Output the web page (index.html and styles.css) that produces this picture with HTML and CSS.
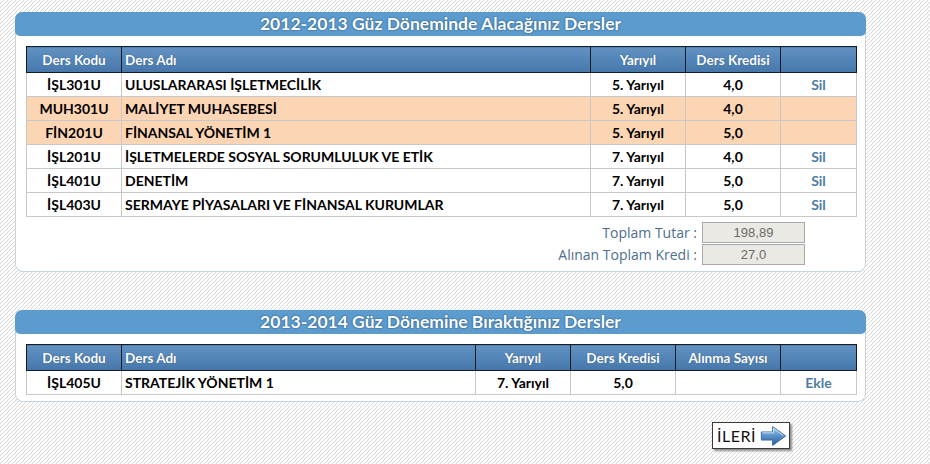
FILE: index.html
```html
<!DOCTYPE html>
<html lang="tr">
<head>
<meta charset="utf-8">
<link rel="stylesheet" href="styles.css">
</head>
<body>
<div class="page">
  <section class="panel">
    <h2 class="panel-title">2012-2013 Güz Döneminde Alacağınız Dersler</h2>
    <div class="panel-body">
      <table class="grid grid-a">
        <colgroup>
          <col class="c-kod"><col class="c-ad"><col class="c-yy"><col class="c-kr"><col class="c-act">
        </colgroup>
        <thead>
          <tr><th>Ders Kodu</th><th class="left">Ders Adı</th><th>Yarıyıl</th><th>Ders Kredisi</th><th></th></tr>
        </thead>
        <tbody>
          <tr><td>İŞL301U</td><td class="left">ULUSLARARASI İŞLETMECİLİK</td><td>5. Yarıyıl</td><td>4,0</td><td><a class="act">Sil</a></td></tr>
          <tr class="locked"><td>MUH301U</td><td class="left">MALİYET MUHASEBESİ</td><td>5. Yarıyıl</td><td>4,0</td><td></td></tr>
          <tr class="locked"><td>FİN201U</td><td class="left">FİNANSAL YÖNETİM 1</td><td>5. Yarıyıl</td><td>5,0</td><td></td></tr>
          <tr><td>İŞL201U</td><td class="left">İŞLETMELERDE SOSYAL SORUMLULUK VE ETİK</td><td>7. Yarıyıl</td><td>4,0</td><td><a class="act">Sil</a></td></tr>
          <tr><td>İŞL401U</td><td class="left">DENETİM</td><td>7. Yarıyıl</td><td>5,0</td><td><a class="act">Sil</a></td></tr>
          <tr><td>İŞL403U</td><td class="left">SERMAYE PİYASALARI VE FİNANSAL KURUMLAR</td><td>7. Yarıyıl</td><td>5,0</td><td><a class="act">Sil</a></td></tr>
        </tbody>
      </table>
      <div class="totals">
        <div class="total-row"><span class="total-label">Toplam Tutar :</span><span class="total-box">198,89</span></div>
        <div class="total-row"><span class="total-label">Alınan Toplam Kredi :</span><span class="total-box">27,0</span></div>
      </div>
    </div>
  </section>

  <section class="panel panel-b">
    <h2 class="panel-title">2013-2014 Güz Dönemine Bıraktığınız Dersler</h2>
    <div class="panel-body">
      <table class="grid grid-b">
        <colgroup>
          <col class="c-kod"><col class="c-ad2"><col class="c-yy"><col class="c-kr2"><col class="c-al"><col class="c-act">
        </colgroup>
        <thead>
          <tr><th>Ders Kodu</th><th class="left">Ders Adı</th><th>Yarıyıl</th><th>Ders Kredisi</th><th>Alınma Sayısı</th><th></th></tr>
        </thead>
        <tbody>
          <tr><td>İŞL405U</td><td class="left">STRATEJİK YÖNETİM 1</td><td>7. Yarıyıl</td><td>5,0</td><td></td><td><a class="act">Ekle</a></td></tr>
        </tbody>
      </table>
    </div>
  </section>

  <div class="actions">
    <button class="next-btn" type="button">
      <span class="next-text">İLERİ</span>
      <svg class="next-arrow" width="30" height="24" viewBox="0 0 30 24" aria-hidden="true">
        <defs>
          <linearGradient id="ag" x1="0" y1="0" x2="0" y2="1">
            <stop offset="0" stop-color="#a9cdef"/>
            <stop offset="0.45" stop-color="#5f97cf"/>
            <stop offset="1" stop-color="#2c5a92"/>
          </linearGradient>
        </defs>
        <path d="M1.5 7.5 H14 V1.5 L28.5 12 L14 22.5 V16.5 H1.5 Z" fill="url(#ag)" stroke="#3a6597" stroke-width="1" stroke-linejoin="round"/>
        <path d="M2.5 8.5 H15 V3.5 L26 11.5" fill="none" stroke="#d3e6f7" stroke-width="1"/>
      </svg>
    </button>
  </div>
</div>
</body>
</html>
```

FILE: styles.css
```css
* { box-sizing: border-box; }
html, body { margin: 0; padding: 0; }
body {
  width: 930px;
  height: 464px;
  overflow: hidden;
  font-family: Lato, "Open Sans", "DejaVu Sans", sans-serif;
  background-color: #ffffff;
  background-image: linear-gradient(-45deg, #d6d6d6 0 12.5%, transparent 12.5% 50%, #d6d6d6 50% 62.5%, transparent 62.5% 100%);
  background-size: 4px 4px;
}
.page {
  padding: 12px 64px 0 15px;
}
.panel {
  width: 851px;
  background: #ffffff;
  border: 1px solid #c9d4dd;
  border-top: none;
  border-radius: 8px;
  padding-bottom: 6px;
}
.panel-b { margin-top: 38px; }
.panel-title {
  margin: 0 -1px;
  height: 24px;
  line-height: 24px;
  background: #5c9bcd;
  border-radius: 7px 7px 5px 5px;
  color: #ffffff;
  text-align: center;
  font-size: 17.5px;
  font-weight: 700;
  text-shadow: 0 0 2px #2d5c85, 0 0 1px #2d5c85;
}
.panel-body {
  padding: 10px 9px 0 10px;
}
.grid {
  width: 830px;
  border-collapse: collapse;
  table-layout: fixed;
  font-size: 14px;
}
.c-kod { width: 95px; }
.c-ad { width: 469px; }
.c-yy { width: 95px; }
.c-kr { width: 95px; }
.c-act { width: 76px; }
.c-ad2 { width: 354px; }
.c-kr2 { width: 105px; }
.c-al { width: 105px; }
.grid th {
  height: 26px;
  padding: 0 3px;
  background: linear-gradient(#6392c2, #5283b6 55%, #4777aa);
  color: #ffffff;
  font-size: 13.5px;
  font-weight: 700;
  border: 1px solid #121a24;
  text-align: center;
  text-shadow: 0 0 1px #2e4e70;
}
.grid td {
  height: 24px;
  padding: 0 3px;
  border: 1px solid #c8c8c8;
  font-weight: 700;
  color: #000000;
  text-align: center;
  white-space: nowrap;
}
.grid th.left, .grid td.left { text-align: left; }
.grid tr.locked td { background: #fcd5b5; }
.act {
  color: #4e7ca3;
  font-weight: 700;
  cursor: pointer;
}
.totals {
  display: flex;
  flex-direction: column;
  gap: 1px;
  padding: 5px 0 0 0;
  margin-right: 51px;
  align-items: flex-end;
}
.total-row {
  display: flex;
  align-items: center;
  gap: 5px;
}
.total-label {
  color: #4d6e8e;
  font-size: 14px;
  font-family: "Open Sans", Lato, sans-serif;
}
.total-box {
  width: 103px;
  height: 21px;
  line-height: 19px;
  background: #ebe9e4;
  border: 1px solid #a9a9a9;
  text-align: center;
  color: #6a6a6a;
  font-size: 13px;
  font-family: "Liberation Sans", Arial, sans-serif;
}
.actions {
  display: flex;
  justify-content: flex-start;
  padding: 20px 0 0 697px;
}
.next-btn {
  display: flex;
  align-items: center;
  gap: 4px;
  width: 78px;
  height: 27px;
  padding: 0 2px 0 4px;
  background: #ffffff;
  border: 1px solid #3a3a3a;
  box-shadow: 2px 2px 2px #8c8c8c;
  font-family: Lato, sans-serif;
  font-size: 16px;
  color: #111;
}
.next-text { letter-spacing: 0.5px; }
```
